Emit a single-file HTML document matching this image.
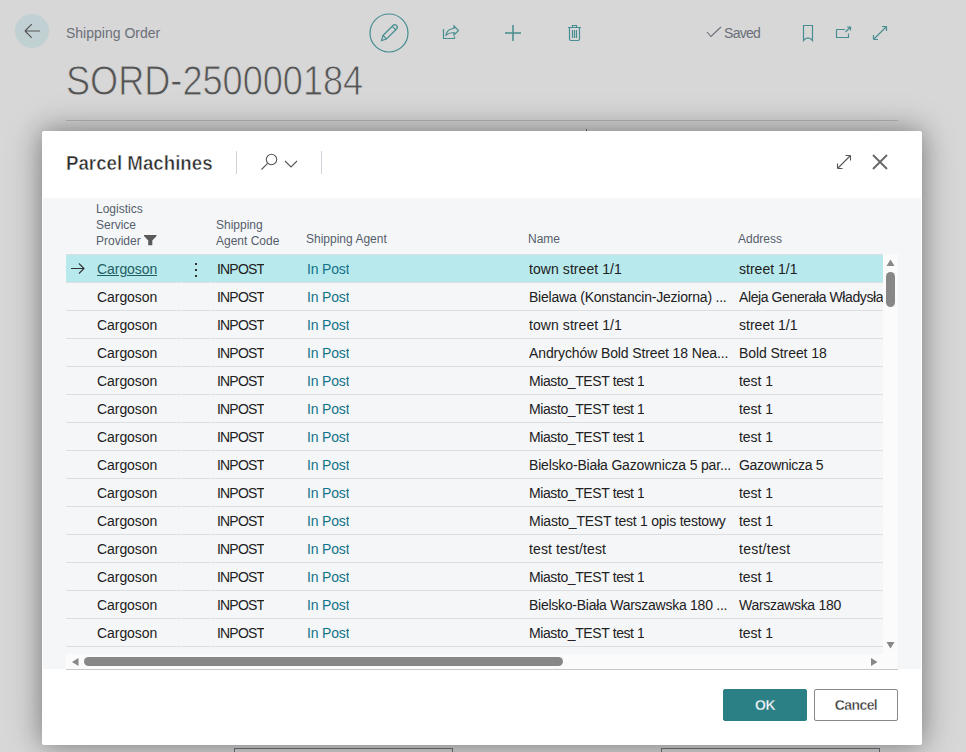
<!DOCTYPE html>
<html><head><meta charset="utf-8">
<style>
*{box-sizing:border-box;margin:0;padding:0}
html,body{width:966px;height:752px;overflow:hidden}
body{background:#d7d7d7;font-family:"Liberation Sans",sans-serif;position:relative;color:#212121}
.abs{position:absolute}
.back{position:absolute;left:15px;top:14px;width:34px;height:34px;border-radius:50%;background:#c1d0d2}
.crumb{position:absolute;left:66px;top:23px;font-size:14px;line-height:20px;color:#6b6f79;white-space:nowrap}
.bigtitle{position:absolute;left:66px;top:57px;font-size:42px;line-height:48px;color:#555;-webkit-text-stroke:0.9px #d7d7d7;white-space:nowrap;transform-origin:0 0;transform:scaleX(0.86)}
.divider{position:absolute;left:66px;top:120px;width:832px;height:1px;background:#b3b5ba}
.saved{position:absolute;left:724px;top:23px;font-size:14px;letter-spacing:-0.7px;line-height:20px;color:#6b6f79;white-space:nowrap}
.dlg{position:absolute;left:42px;top:131px;width:880px;height:614px;background:#fff;border-radius:2px;box-shadow:0 0 24px rgba(0,0,0,.3),0 0 40px rgba(0,0,0,.2)}
.dtitle{position:absolute;left:66px;top:151px;font-size:20px;line-height:24px;font-weight:700;color:#2b2b2b;-webkit-text-stroke:0.5px #fff;transform-origin:0 0;transform:scaleX(0.935);white-space:nowrap}
.vsep{position:absolute;width:1px;background:#cfd4da}
.grid{position:absolute;left:43px;top:198px;width:878px;height:471px;background:#f5f6f8}
.hdr{position:absolute;font-size:12px;line-height:16px;color:#555e6b;white-space:nowrap}
.row{position:absolute;left:66px;width:817px;height:28px;border-bottom:1px solid #dcdee2;font-size:14px;line-height:27px;white-space:nowrap;color:#212121}
.row.sel{background:#b8e9ec}
.row span{position:absolute;top:0;line-height:29px;overflow:hidden}
.row b{position:absolute;top:27px;width:1px;height:1px;background:#f5f6f8}
.g1{left:115px} .g2{left:144px}
.c1{left:31px}
.c2{left:151px}
.c3{left:241px;color:#137389}
.c4{left:463px}
.c5{left:673px;width:144px}
.sel .c1{text-decoration:underline;color:#1f5f63}
.arrow{position:absolute;left:0;top:4px}
.kebab{position:absolute;left:129px;top:8px;width:3px;height:14px}
.kebab i{display:block;width:2px;height:2px;background:#333;margin-bottom:4px}
.vtrack{position:absolute;left:883px;top:254px;width:15px;height:400px;background:#fbfbfb}
.htrack{position:absolute;left:66px;top:654px;width:832px;height:16px;background:#fbfbfb;border-bottom:1px solid #c6c8cb}
.thumbv{position:absolute;left:886px;top:272px;width:9px;height:35px;border-radius:5px;background:#878787}
.thumbh{position:absolute;left:84px;top:657px;width:479px;height:9px;border-radius:5px;background:#878787}
.btn{position:absolute;top:689px;width:84px;height:32px;border-radius:2px;font-size:14px;font-weight:700;line-height:30px;text-align:center}
.ok{left:723px;background:#2b8085;color:#fff;border:1px solid #2b8085;-webkit-text-stroke:0.4px #2b8085;letter-spacing:-0.6px}
.cancel{left:814px;background:#fff;color:#323130;border:1px solid #8a8886;-webkit-text-stroke:0.4px #fff;letter-spacing:-0.6px}
.field{position:absolute;top:748px;height:20px;border:1px solid #6f737b;background:transparent}
</style></head><body>
<div class="back"></div>
<svg class="abs" style="left:0;top:0" width="966" height="60" viewBox="0 0 966 60">
  <g fill="none" stroke="#555" stroke-width="1.2">
    <path d="M25 31 H40 M25 31 L31.8 24.2 M25 31 L31.8 37.8"/>
  </g>
  <g fill="none" stroke="#478d91" stroke-width="1.2">
    <circle cx="389" cy="33" r="19"/>
    <path d="M383 35.5 L393 25.5 A2.2 2.2 0 0 1 396.5 29 L386.5 39 Z M383 35.5 L381.5 40.5 L386.5 39 M392.3 26.3 L395.7 29.7"/>
    <path d="M443.5 29 V38.5 H454.5 V36.5 M446 35 C447 30 450 28.5 454 28.5 V26 L458.5 30.5 L454 35 V32.5 C450.5 32.5 448 33.5 446 35Z"/>
    <path d="M505 33 H521 M513 25 V41" stroke-width="1.5"/>
    <path d="M568 27.5 H581 M572.5 27.5 V25.5 H576.5 V27.5 M569.5 27.5 V39 Q569.5 40.5 571 40.5 H578 Q579.5 40.5 579.5 39 V27.5 M572.5 30 V38 M574.5 30 V38 M576.5 30 V38"/>
    <path d="M803.5 25.5 V40.5 Q808 35.3 812.5 40.5 V25.5 Z"/>
    <path d="M836.5 29.5 H845 M836.5 29.5 V37.5 H848.5 V33.5 M845.5 32 L850.5 27 M847 27 H850.5 V30.5"/>
    <path d="M873.5 39.5 L886.5 26.5 M873.5 39.5 V35 M873.5 39.5 H878 M886.5 26.5 H882 M886.5 26.5 V31"/>
  </g>
  <path d="M707 32 L711 36.5 L721 27" fill="none" stroke="#6b6f79" stroke-width="1.1"/>
</svg>
<div class="crumb">Shipping Order</div>
<div class="bigtitle">SORD-250000184</div>
<div class="divider"></div>
<div class="abs" style="left:586px;top:129px;width:1px;height:2px;background:#6e7075"></div>
<div class="saved">Saved</div>
<div class="field" style="left:234px;width:219px"></div>
<div class="field" style="left:661px;width:219px"></div>

<div class="dlg"></div>
<div class="dtitle">Parcel Machines</div>
<div class="vsep" style="left:236px;top:151px;height:23px"></div>
<div class="vsep" style="left:321px;top:151px;height:23px"></div>
<svg class="abs" style="left:0;top:130px" width="966" height="60" viewBox="0 130 966 60">
  <g fill="none" stroke="#555" stroke-width="1.1">
    <circle cx="271.5" cy="159.5" r="5.2"/>
    <path d="M267.6 163.4 L261.5 169.5"/>
    <path d="M285 161 L291 167 L297 161"/>
    <path d="M837.5 168.5 L850.5 155.5 M837.5 168.5 V163.5 M837.5 168.5 H842.5 M850.5 155.5 H845.5 M850.5 155.5 V160.5"/>
  </g>
  <path d="M873 155 L887 169 M887 155 L873 169" fill="none" stroke="#666" stroke-width="1.8"/>
</svg>

<div class="grid"></div>
<div class="hdr" style="left:96px;top:201px">Logistics<br>Service<br>Provider</div>
<svg class="abs" style="left:144px;top:235px" width="13" height="11" viewBox="0 0 13 11"><path d="M0 0 H12.5 V1 L8.3 5.5 V10.2 H4.2 V5.5 L0 1 Z" fill="#5a5a5a"/></svg>
<div class="hdr" style="left:216px;top:217px">Shipping<br>Agent Code</div>
<div class="hdr" style="left:306px;top:231px">Shipping Agent</div>
<div class="hdr" style="left:528px;top:231px">Name</div>
<div class="hdr" style="left:738px;top:231px">Address</div>
<div class="abs" style="left:66px;top:254px;width:817px;height:1px;background:#dcdee2"></div>
<div class="row sel" style="top:255px"><svg class="arrow" width="20" height="20" viewBox="66 259 20 20"><path d="M71 268.5 H84 M79 263.5 L84 268.5 L79 273.5" fill="none" stroke="#333" stroke-width="1.1"/></svg><div class="kebab"><i></i><i></i><i></i></div><span class="c1" style="letter-spacing:-0.057px">Cargoson</span><span class="c2" style="letter-spacing:-0.820px">INPOST</span><span class="c3" style="letter-spacing:-0.167px">In Post</span><span class="c4" style="letter-spacing:0.071px">town street 1/1</span><span class="c5" style="letter-spacing:0.011px">street 1/1</span><b class="g1"></b><b class="g2"></b></div>
<div class="row" style="top:283px"><span class="c1" style="letter-spacing:-0.057px">Cargoson</span><span class="c2" style="letter-spacing:-0.820px">INPOST</span><span class="c3" style="letter-spacing:-0.167px">In Post</span><span class="c4" style="letter-spacing:-0.216px">Bielawa (Konstancin-Jeziorna) ...</span><span class="c5" style="letter-spacing:-0.400px">Aleja Generała Władysława</span><b class="g1"></b><b class="g2"></b></div>
<div class="row" style="top:311px"><span class="c1" style="letter-spacing:-0.057px">Cargoson</span><span class="c2" style="letter-spacing:-0.820px">INPOST</span><span class="c3" style="letter-spacing:-0.167px">In Post</span><span class="c4" style="letter-spacing:0.071px">town street 1/1</span><span class="c5" style="letter-spacing:0.011px">street 1/1</span><b class="g1"></b><b class="g2"></b></div>
<div class="row" style="top:339px"><span class="c1" style="letter-spacing:-0.057px">Cargoson</span><span class="c2" style="letter-spacing:-0.820px">INPOST</span><span class="c3" style="letter-spacing:-0.167px">In Post</span><span class="c4" style="letter-spacing:-0.123px">Andrychów Bold Street 18 Nea...</span><span class="c5" style="letter-spacing:-0.077px">Bold Street 18</span><b class="g1"></b><b class="g2"></b></div>
<div class="row" style="top:367px"><span class="c1" style="letter-spacing:-0.057px">Cargoson</span><span class="c2" style="letter-spacing:-0.820px">INPOST</span><span class="c3" style="letter-spacing:-0.167px">In Post</span><span class="c4" style="letter-spacing:-0.400px">Miasto_TEST test 1</span><span class="c5" style="letter-spacing:-0.040px">test 1</span><b class="g1"></b><b class="g2"></b></div>
<div class="row" style="top:395px"><span class="c1" style="letter-spacing:-0.057px">Cargoson</span><span class="c2" style="letter-spacing:-0.820px">INPOST</span><span class="c3" style="letter-spacing:-0.167px">In Post</span><span class="c4" style="letter-spacing:-0.400px">Miasto_TEST test 1</span><span class="c5" style="letter-spacing:-0.040px">test 1</span><b class="g1"></b><b class="g2"></b></div>
<div class="row" style="top:423px"><span class="c1" style="letter-spacing:-0.057px">Cargoson</span><span class="c2" style="letter-spacing:-0.820px">INPOST</span><span class="c3" style="letter-spacing:-0.167px">In Post</span><span class="c4" style="letter-spacing:-0.400px">Miasto_TEST test 1</span><span class="c5" style="letter-spacing:-0.040px">test 1</span><b class="g1"></b><b class="g2"></b></div>
<div class="row" style="top:451px"><span class="c1" style="letter-spacing:-0.057px">Cargoson</span><span class="c2" style="letter-spacing:-0.820px">INPOST</span><span class="c3" style="letter-spacing:-0.167px">In Post</span><span class="c4" style="letter-spacing:-0.172px">Bielsko-Biała Gazownicza 5 par...</span><span class="c5" style="letter-spacing:-0.309px">Gazownicza 5</span><b class="g1"></b><b class="g2"></b></div>
<div class="row" style="top:479px"><span class="c1" style="letter-spacing:-0.057px">Cargoson</span><span class="c2" style="letter-spacing:-0.820px">INPOST</span><span class="c3" style="letter-spacing:-0.167px">In Post</span><span class="c4" style="letter-spacing:-0.400px">Miasto_TEST test 1</span><span class="c5" style="letter-spacing:-0.040px">test 1</span><b class="g1"></b><b class="g2"></b></div>
<div class="row" style="top:507px"><span class="c1" style="letter-spacing:-0.057px">Cargoson</span><span class="c2" style="letter-spacing:-0.820px">INPOST</span><span class="c3" style="letter-spacing:-0.167px">In Post</span><span class="c4" style="letter-spacing:-0.227px">Miasto_TEST test 1 opis testowy</span><span class="c5" style="letter-spacing:-0.040px">test 1</span><b class="g1"></b><b class="g2"></b></div>
<div class="row" style="top:535px"><span class="c1" style="letter-spacing:-0.057px">Cargoson</span><span class="c2" style="letter-spacing:-0.820px">INPOST</span><span class="c3" style="letter-spacing:-0.167px">In Post</span><span class="c4" style="letter-spacing:0.115px">test test/test</span><span class="c5" style="letter-spacing:0.263px">test/test</span><b class="g1"></b><b class="g2"></b></div>
<div class="row" style="top:563px"><span class="c1" style="letter-spacing:-0.057px">Cargoson</span><span class="c2" style="letter-spacing:-0.820px">INPOST</span><span class="c3" style="letter-spacing:-0.167px">In Post</span><span class="c4" style="letter-spacing:-0.400px">Miasto_TEST test 1</span><span class="c5" style="letter-spacing:-0.040px">test 1</span><b class="g1"></b><b class="g2"></b></div>
<div class="row" style="top:591px"><span class="c1" style="letter-spacing:-0.057px">Cargoson</span><span class="c2" style="letter-spacing:-0.820px">INPOST</span><span class="c3" style="letter-spacing:-0.167px">In Post</span><span class="c4" style="letter-spacing:-0.258px">Bielsko-Biała Warszawska 180 ...</span><span class="c5" style="letter-spacing:-0.300px">Warszawska 180</span><b class="g1"></b><b class="g2"></b></div>
<div class="row" style="top:619px"><span class="c1" style="letter-spacing:-0.057px">Cargoson</span><span class="c2" style="letter-spacing:-0.820px">INPOST</span><span class="c3" style="letter-spacing:-0.167px">In Post</span><span class="c4" style="letter-spacing:-0.400px">Miasto_TEST test 1</span><span class="c5" style="letter-spacing:-0.040px">test 1</span><b class="g1"></b><b class="g2"></b></div>
<div class="vtrack"></div>
<div class="htrack"></div>
<div class="thumbv"></div>
<div class="thumbh"></div>
<svg class="abs" style="left:0;top:250px" width="966" height="430" viewBox="0 250 966 430">
  <g fill="#878787">
    <path d="M886.5 266 L890.5 259.5 L894.5 266 Z"/>
    <path d="M886.5 642 L890.5 648.5 L894.5 642 Z"/>
    <path d="M78.5 658 L72 662 L78.5 666 Z"/>
    <path d="M871 658 L877.5 662 L871 666 Z"/>
  </g>
</svg>
<div class="btn ok">OK</div>
<div class="btn cancel">Cancel</div>
</body></html>
